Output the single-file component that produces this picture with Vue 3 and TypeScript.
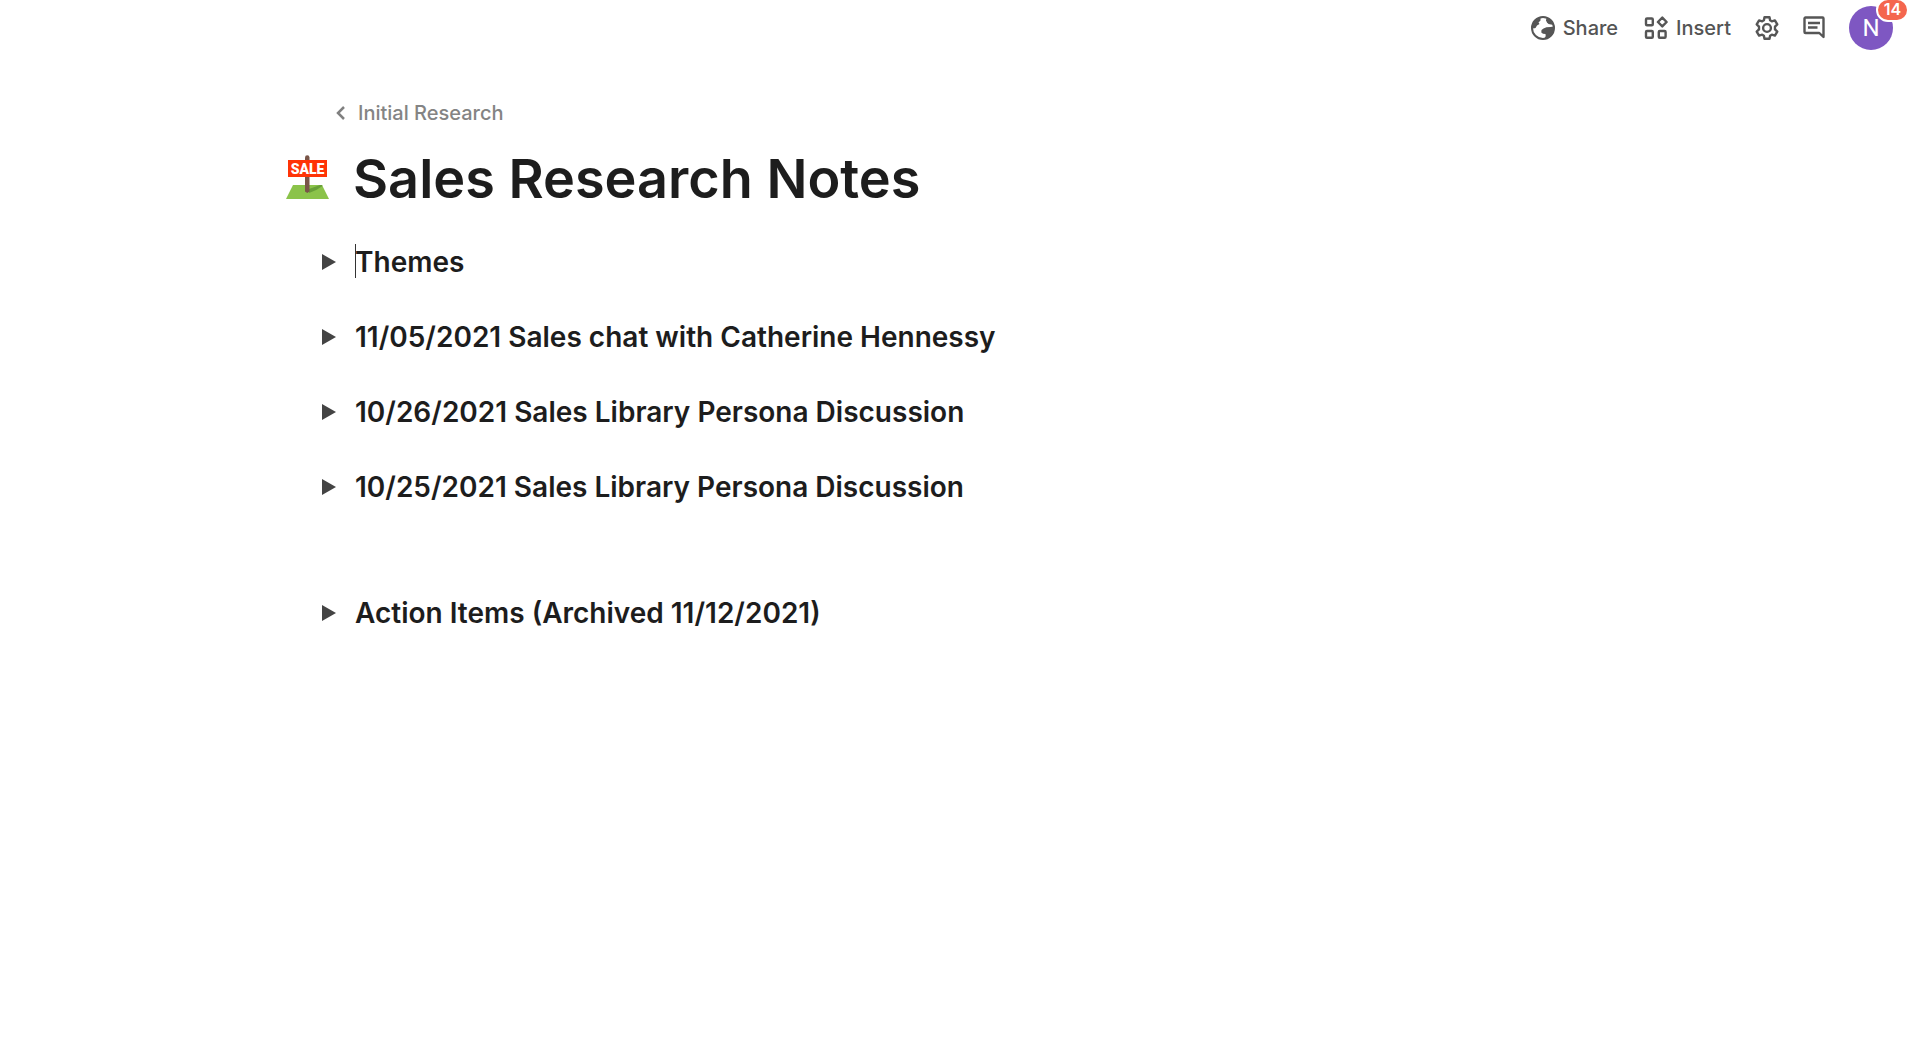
<script setup lang="ts">
import { ref } from 'vue'

interface Section {
  id: number
  title: string
  active?: boolean
  spaced?: boolean
}

const sections: Section[] = [
  { id: 1, title: 'Themes', active: true },
  { id: 2, title: '11/05/2021 Sales chat with Catherine Hennessy' },
  { id: 3, title: '10/26/2021 Sales Library Persona Discussion' },
  { id: 4, title: '10/25/2021 Sales Library Persona Discussion' },
  { id: 5, title: 'Action Items (Archived 11/12/2021)', spaced: true },
]

const notifications = ref(14)
</script>

<template>
  <div class="page">
    <header class="toolbar">
      <button class="tool share" type="button">
        <svg width="24" height="24" viewBox="0 0 24 24" aria-hidden="true">
          <circle cx="12" cy="12" r="11" fill="#fff" stroke="#565656" stroke-width="2" />
          <path d="M2 7.5 6 2.5 9.500 1.500V4.500L7.500 6.500 8.500 8 6 9.500 4.500 12 2.500 12.500 1 11Z" fill="#565656" />
          <path d="M15.500 1.500 15 4.500 16 6.500 17.500 8 20 8.500 22.500 9 20 4.500Z" fill="#565656" />
          <path d="M23 10.500 19.500 11 15.500 11.200 12.500 12.500 10.500 14 10.300 16.500 12 17.800 14.500 18 14.700 20 13.500 23 18.500 21.500 22 17Z" fill="#565656" />
        </svg>
        <span>Share</span>
      </button>
      <button class="tool insert" type="button">
        <svg width="24" height="24" viewBox="0 0 24 24" fill="none" stroke="#565656" stroke-width="2.4" stroke-linejoin="round" aria-hidden="true">
          <rect x="2" y="2.500" width="6.800" height="6.800" rx="1" />
          <rect x="2" y="15" width="6.800" height="6.800" rx="1" />
          <rect x="14.800" y="15" width="6.800" height="6.800" rx="1" />
          <path d="M18.300 1.600 22.600 6 18.300 10.400 13.900 6Z" />
        </svg>
        <span>Insert</span>
      </button>
      <button class="tool settings" type="button" aria-label="Settings">
        <svg width="24" height="24" viewBox="0 0 24 24" fill="none" stroke="#565656" stroke-width="2.400" stroke-linejoin="round" aria-hidden="true">
          <path d="M9.500 1.200h5l.6 3.100 1.700 1 3.100-.9 2.400 4-2.300 2.200v2.800l2.300 2.200-2.400 4-3.100-.9-1.700 1-.6 3.100h-5l-.6-3.100-1.700-1-3.100.9-2.400-4L4 13.400v-2.800L1.700 8.400l2.400-4 3.100.9 1.700-1Z" />
          <circle cx="12" cy="12" r="3.900" />
        </svg>
      </button>
      <button class="tool comments" type="button" aria-label="Comments">
        <svg width="24" height="24" viewBox="0 0 24 24" fill="none" stroke="#565656" stroke-width="2.400" aria-hidden="true">
          <path d="M21.500 21V2.500a1 1 0 0 0-1-1h-17a1 1 0 0 0-1 1v13.500a1 1 0 0 0 1 1h13.800Z" stroke-linejoin="round" />
          <path d="M6 7h12M6 11.500h9.500" />
        </svg>
      </button>
      <button class="avatar" type="button" aria-label="Account">
        N
        <span class="badge">{{ notifications }}</span>
      </button>
    </header>

    <main class="doc">
      <nav class="crumb">
        <a href="#">
          <svg width="9" height="14" viewBox="0 0 9 14" fill="none" stroke="#808080" stroke-width="2.500" aria-hidden="true">
            <path d="M8 1 2 7l6 6" />
          </svg>
          <span>Initial Research</span>
        </a>
      </nav>

      <div class="heading">
        <svg class="emblem" width="44" height="46" viewBox="0 0 44 46" role="img" aria-label="Sale sign">
          <path d="M7 31H36L43 45H0Z" fill="#8bc34a" />
          <path d="M23 39V35L34 31H36L36.500 32Q30 37 23 39Z" fill="#689f38" />
          <path d="M19 3.500a2.200 2.200 0 0 1 4.500 0V37.500l-2.200 1.500-2.300-1.500Z" fill="#795548" />
          <rect x="2" y="6" width="39" height="17" fill="#ff3407" />
          <text x="21.500" y="19.500" text-anchor="middle" class="sale">SALE</text>
        </svg>
        <h1>Sales Research Notes</h1>
      </div>

      <section
        v-for="section in sections"
        :key="section.id"
        class="row"
        :class="{ spaced: section.spaced }"
      >
        <h2>
          <button type="button" aria-expanded="false">
            <svg class="arrow" width="14" height="16" viewBox="0 0 14 16" aria-hidden="true">
              <path d="M0 0 14 8 0 16Z" fill="#444" />
            </svg>
            <span class="label">{{ section.title }}<i v-if="section.active" class="caret"></i></span>
          </button>
        </h2>
      </section>
    </main>
  </div>
</template>

<style>
body {
  background: #fff;
}
</style>

<style scoped>
.page {
  font-family: Inter, "Liberation Sans", sans-serif;
  color: #1d1d1d;
}

button {
  padding: 0;
  border: 0;
  background: none;
  color: inherit;
  font: inherit;
  cursor: pointer;
}

svg {
  flex: none;
}

.toolbar {
  display: flex;
  justify-content: flex-end;
  align-items: center;
  height: 56px;
  padding-right: 27px;
}

.tool {
  display: flex;
  align-items: center;
  gap: 8px;
  color: #545454;
  font-size: 20px;
  font-weight: 500;
  line-height: 24px;
}

.share {
  margin-right: 26px;
}

.insert {
  margin-right: 24px;
}

.settings,
.comments {
  margin-right: 23px;
}

.avatar {
  position: relative;
  width: 44px;
  height: 44px;
  border-radius: 50%;
  background: #7e57c2;
  color: #fff;
  font-family: Roboto, sans-serif;
  font-size: 24px;
  font-weight: 400;
  line-height: 44px;
}

.badge {
  position: absolute;
  top: -8px;
  right: -16px;
  box-sizing: content-box;
  width: 29px;
  height: 20px;
  border: 2px solid #fff;
  border-radius: 12px;
  background: #f4664e;
  font-family: Inter, sans-serif;
  font-size: 16px;
  font-weight: 600;
  line-height: 18px;
}

.doc {
  padding: 44px 40px 80px 286px;
}

.crumb {
  display: flex;
  margin-left: 50px;
}

.crumb a {
  display: flex;
  align-items: center;
  gap: 13px;
  color: #848484;
  font-size: 20px;
  font-weight: 500;
  line-height: 26px;
  text-decoration: none;
}

.heading {
  display: flex;
  align-items: center;
  gap: 23px;
  margin: 17px 0 30px;
}

.emblem {
  margin-bottom: 4px;
}

h1 {
  margin: 0;
  font-size: 54px;
  font-weight: 600;
  line-height: 72px;
}

.sale {
  fill: #fff;
  font-family: Roboto, sans-serif;
  font-size: 14px;
  font-weight: 900;
}

.row {
  margin: 0 0 40px 36px;
}

.row.spaced {
  margin-top: 91px;
}

h2 {
  margin: 0;
  font-size: 28px;
  font-weight: 600;
  line-height: 35px;
}

h2 button {
  display: flex;
  align-items: center;
  gap: 19px;
  text-align: left;
}

.arrow {
  margin-bottom: 2px;
}

.label {
  position: relative;
}

.caret {
  position: absolute;
  top: -1px;
  left: 0;
  width: 1px;
  height: 34px;
  background: #333;
}
</style>
